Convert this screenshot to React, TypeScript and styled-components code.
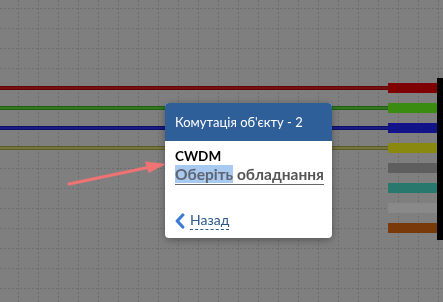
import React from "react";
import styled, { createGlobalStyle } from "styled-components";

const GlobalStyle = createGlobalStyle`
  html, body {
    margin: 0;
    padding: 0;
    overflow: hidden;
  }
  body {
    font-family: "Lato", "Noto Sans", sans-serif;
  }
`;

type Cable = { block: string; wire?: string; edge?: string };

const cables: Cable[] = [
  { block: "#e60000", wire: "#d81c1c", edge: "#b00a0a" },
  { block: "#69ff1d", wire: "#5cd83a", edge: "#3fae1e" },
  { block: "#2121fa", wire: "#3030ee", edge: "#1a1ab8" },
  { block: "#fafa1d", wire: "#d2d27a", edge: "#a8a83a" },
  { block: "#ababab" },
  { block: "#49dac8" },
  { block: "#fafafa" },
  { block: "#de690f" },
];

// dotted grid: 1x2 dashes every 4px, lines every 20px
const Canvas = styled.div`
  width: 100vw;
  height: 100vh;
  display: flex;
  background-color: #e8e8e8;
  background-image:
    conic-gradient(at 1px 2px, transparent 75%, #c6c6c6 0),
    conic-gradient(at 2px 1px, transparent 75%, #c6c6c6 0);
  background-size: 20px 4px, 4px 20px;
  background-position: 18px 0, 0 8px;
`;

const Cables = styled.div`
  flex: 1;
  display: flex;
  flex-direction: column;
  gap: 10px;
  padding-top: 83px;
`;

const CableRow = styled.div`
  display: flex;
  align-items: center;
  height: 10px;
`;

const Wire = styled.div<{ $color?: string; $edge?: string }>`
  flex: 1;
  height: 2px;
  background: ${(p) => p.$color ?? "transparent"};
  border-top: 1px solid ${(p) => p.$edge ?? "transparent"};
  border-bottom: 1px solid ${(p) => p.$edge ?? "transparent"};
`;

const Port = styled.div<{ $color: string }>`
  width: 49px;
  height: 10px;
  background: ${(p) => p.$color};
`;

const Rack = styled.div`
  width: 6px;
  height: 162px;
  margin-top: 78px;
  background: #000;
`;

const Backdrop = styled.div`
  position: fixed;
  inset: 0;
  background: rgba(0, 0, 0, 0.45);
  padding: 103px 0 0 165px;
`;

const Dialog = styled.div`
  width: 167px;
  height: 135px;
  display: flex;
  flex-direction: column;
  background: #fff;
  border-radius: 4px;
  overflow: hidden;
  box-shadow: 0 2px 8px rgba(0, 0, 0, 0.35);
`;

const Header = styled.div`
  height: 38px;
  display: flex;
  align-items: center;
  padding: 0 10px;
  background: #2f5f99;
  color: #fff;
  font-size: 13px;
`;

const Body = styled.div`
  flex: 1;
  display: flex;
  flex-direction: column;
  padding: 7px 10px 8px;
`;

const Title = styled.div`
  font-size: 13.5px;
  line-height: 17px;
  font-weight: 700;
  color: #000;
`;

const Picker = styled.div`
  align-self: flex-start;
  white-space: nowrap;
  font-size: 15.5px;
  line-height: 19px;
  font-weight: 700;
  color: #555;
  border-bottom: 1px solid #666;
`;

const Selected = styled.span`
  background: #a8c9f0;
  color: #5f6470;
`;

const Back = styled.a`
  margin-top: auto;
  display: flex;
  align-items: center;
  gap: 5px;
  font-size: 14px;
  line-height: 18px;
  color: #2b5a8c;
  text-decoration: none;
  cursor: pointer;
`;

const BackLabel = styled.span`
  border-bottom: 1px dashed #2b5a8c;
`;

const Pointer = styled.svg`
  position: fixed;
  left: 0;
  top: 0;
  pointer-events: none;
`;

export default function App() {
  return (
    <>
      <GlobalStyle />
      <Canvas>
        <Cables>
          {cables.map((c, i) => (
            <CableRow key={i}>
              <Wire $color={c.wire} $edge={c.edge} />
              <Port $color={c.block} />
            </CableRow>
          ))}
        </Cables>
        <Rack />
      </Canvas>
      <Backdrop>
        <Dialog>
          <Header>Комутація об'єкту - 2</Header>
          <Body>
            <Title>CWDM</Title>
            <Picker>
              <Selected>Оберіть</Selected> обладнання
            </Picker>
            <Back>
              <svg width="10" height="16" viewBox="0 0 10 16">
                <path
                  d="M7.8 2 L2.2 8 L7.8 14"
                  fill="none"
                  stroke="#3a7bd5"
                  strokeWidth="3.2"
                  strokeLinecap="round"
                  strokeLinejoin="round"
                />
              </svg>
              <BackLabel>Назад</BackLabel>
            </Back>
          </Body>
        </Dialog>
      </Backdrop>
      <Pointer width="443" height="302" viewBox="0 0 443 302">
        <line x1="69" y1="184" x2="148" y2="167.5" stroke="#f07272" strokeWidth="3" strokeLinecap="round" />
        <polygon points="166,164 145,161.5 148.5,173" fill="#f07272" />
      </Pointer>
    </>
  );
}
